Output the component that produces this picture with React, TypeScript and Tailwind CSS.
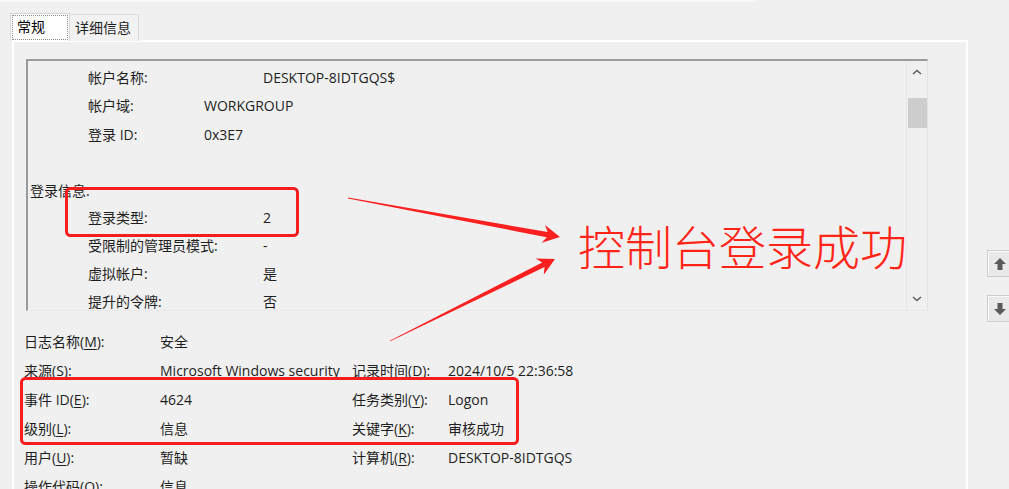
import React from "react";

type BoxRow = { indent: boolean; label: string; value?: string; w?: number; h: number };

const boxRows: BoxRow[] = [
  { indent: true, label: "帐户名称:", value: "DESKTOP-8IDTGQS$", w: 175, h: 28 },
  { indent: true, label: "帐户域:", value: "WORKGROUP", w: 116, h: 29 },
  { indent: true, label: "登录 ID:", value: "0x3E7", w: 116, h: 29 },
  { indent: false, label: "", h: 28 },
  { indent: false, label: "登录信息:", h: 26 },
  { indent: true, label: "登录类型:", value: "2", w: 175, h: 28 },
  { indent: true, label: "受限制的管理员模式:", value: "-", w: 175, h: 28 },
  { indent: true, label: "虚拟帐户:", value: "是", w: 175, h: 28 },
  { indent: true, label: "提升的令牌:", value: "否", w: 175, h: 28 },
];

type Field = { name: string; key: string };
const fields: [Field, string, Field | null, string][] = [
  [{ name: "日志名称", key: "M" }, "安全", null, ""],
  [{ name: "来源", key: "S" }, "Microsoft Windows security", { name: "记录时间", key: "D" }, "2024/10/5 22:36:58"],
  [{ name: "事件 ID", key: "E" }, "4624", { name: "任务类别", key: "Y" }, "Logon"],
  [{ name: "级别", key: "L" }, "信息", { name: "关键字", key: "K" }, "审核成功"],
  [{ name: "用户", key: "U" }, "暂缺", { name: "计算机", key: "R" }, "DESKTOP-8IDTGQS"],
  [{ name: "操作代码", key: "O" }, "信息", null, ""],
];

function Label({ f }: { f: Field | null }) {
  if (!f) return <span />;
  return (
    <span>
      {f.name}(<u className="underline-offset-2">{f.key}</u>):
    </span>
  );
}

// tapered annotation arrow, thin at the tail and thick near the head
function arrow(x1: number, y1: number, x2: number, y2: number) {
  const dx = x2 - x1;
  const dy = y2 - y1;
  const len = Math.hypot(dx, dy);
  const ux = dx / len;
  const uy = dy / len;
  const nx = -uy;
  const ny = ux;
  const neck = 13;
  const barb = 17;
  const p = (d: number, w: number) => `${x2 - ux * d + nx * w},${y2 - uy * d + ny * w}`;
  const t = (w: number) => `${x1 + nx * w},${y1 + ny * w}`;
  return [t(0.4), p(neck, 2.6), p(barb, 9), `${x2},${y2}`, p(barb, -9), p(neck, -2.6), t(-0.4)].join(" ");
}

function ArrowButton({ down }: { down?: boolean }) {
  return (
    <div className="w-[26px] h-[27px] border border-[#cdcdcd] bg-[#e9e9e9] shadow-[inset_1px_1px_0_#fafafa] flex items-center justify-center">
      <svg width="14" height="14" viewBox="0 0 14 14" className={down ? "rotate-180" : ""}>
        <path d="M7 1 L13 7 L9.5 7 L9.5 13 L4.5 13 L4.5 7 L1 7 Z" fill="#5a5a5a" />
      </svg>
    </div>
  );
}

export default function App() {
  return (
    <div className="relative w-[1009px] h-[489px] overflow-hidden bg-[#f0f0f0] text-[#1e1e1e] text-[14px] font-['Open_Sans','Noto_Sans_CJK_SC',sans-serif]">
      <div className="flex">
        {/* property sheet */}
        <div className="w-[968px] shrink-0 pl-[10px]">
          <div className="h-[2px] w-[755px] -ml-[10px] bg-[#f8f8f8]" />
          <div className="flex mt-[11px] items-end">
            <div className="w-[60px] h-[28px] border border-[#d6d6d6] border-b-0 bg-white p-[1px] relative z-10">
              <div className="h-full border border-dotted border-[#8a8a8a] pl-[4px] leading-[21px] text-black">常规</div>
            </div>
            <div className="w-[69px] h-[27px] border border-[#dcdcdc] border-l-0 border-b-0 bg-[#f2f2f2] pl-[5px] leading-[25px]">
              详细信息
            </div>
          </div>
          <div className="ml-[2px] -mt-[1px] h-[460px] border-t-2 border-l-2 border-r-2 border-white pl-[12px] pt-[17px]">
            {/* description text box */}
            <div className="w-[902px] h-[252px] border-t-2 border-l-2 border-[#9a9a9a] border-r border-b border-r-[#e3e3e3] border-b-[#e8e8e8] flex">
              <div className="flex-1 pt-[2px] overflow-hidden">
                {boxRows.map((r, i) => (
                  <div
                    key={i}
                    className={`flex items-center whitespace-nowrap ${r.indent ? "pl-[60px]" : "pl-[2px]"}`}
                    style={{ height: r.h }}
                  >
                    <span className="inline-block" style={{ width: r.w }}>{r.label}</span>
                    {r.value && <span>{r.value}</span>}
                  </div>
                ))}
              </div>
              <div className="w-[21px] border-l border-[#e6e6e6] flex flex-col items-center">
                <svg width="10" height="6" viewBox="0 0 10 6" className="mt-[8px]">
                  <polyline points="1,5 5,1.5 9,5" fill="none" stroke="#606060" strokeWidth="1.6" />
                </svg>
                <div className="mt-[23px] w-[19px] h-[30px] bg-[#cdcdcd]" />
                <div className="flex-1" />
                <svg width="10" height="6" viewBox="0 0 10 6" className="mb-[8px]">
                  <polyline points="1,1 5,4.5 9,1" fill="none" stroke="#606060" strokeWidth="1.6" />
                </svg>
              </div>
            </div>
            {/* event fields */}
            <div className="-ml-[2px] mt-[16px] grid grid-cols-[136px_192px_96px_1fr] auto-rows-[29px]">
              {fields.map(([a, av, b, bv], i) => (
                <React.Fragment key={i}>
                  <div className="flex items-center whitespace-nowrap"><Label f={a} /></div>
                  <div className="flex items-center whitespace-nowrap">{av}</div>
                  <div className="flex items-center whitespace-nowrap"><Label f={b} /></div>
                  <div className="flex items-center whitespace-nowrap">{bv}</div>
                </React.Fragment>
              ))}
            </div>
          </div>
        </div>
        {/* side buttons */}
        <div className="ml-[19px] pt-[250px] flex flex-col gap-[18px]">
          <ArrowButton />
          <ArrowButton down />
        </div>
      </div>

      {/* red annotations */}
      <svg className="absolute inset-0 pointer-events-none" width="1009" height="489">
        <rect x="66.5" y="188.5" width="231" height="47" rx="4" fill="none" stroke="#f51d1d" strokeWidth="3" />
        <rect x="21.5" y="378.5" width="496" height="65" rx="4" fill="none" stroke="#f51d1d" strokeWidth="3" />
        <polygon points={arrow(348, 198, 560, 237)} fill="#fb2020" />
        <polygon points={arrow(390, 341, 555, 259)} fill="#fb2020" />
      </svg>
      <div className="absolute left-[578px] top-[221px] text-[47px] leading-none font-light text-[#ff2416] whitespace-nowrap font-['Noto_Sans_CJK_SC',sans-serif]">
        控制台登录成功
      </div>
    </div>
  );
}
